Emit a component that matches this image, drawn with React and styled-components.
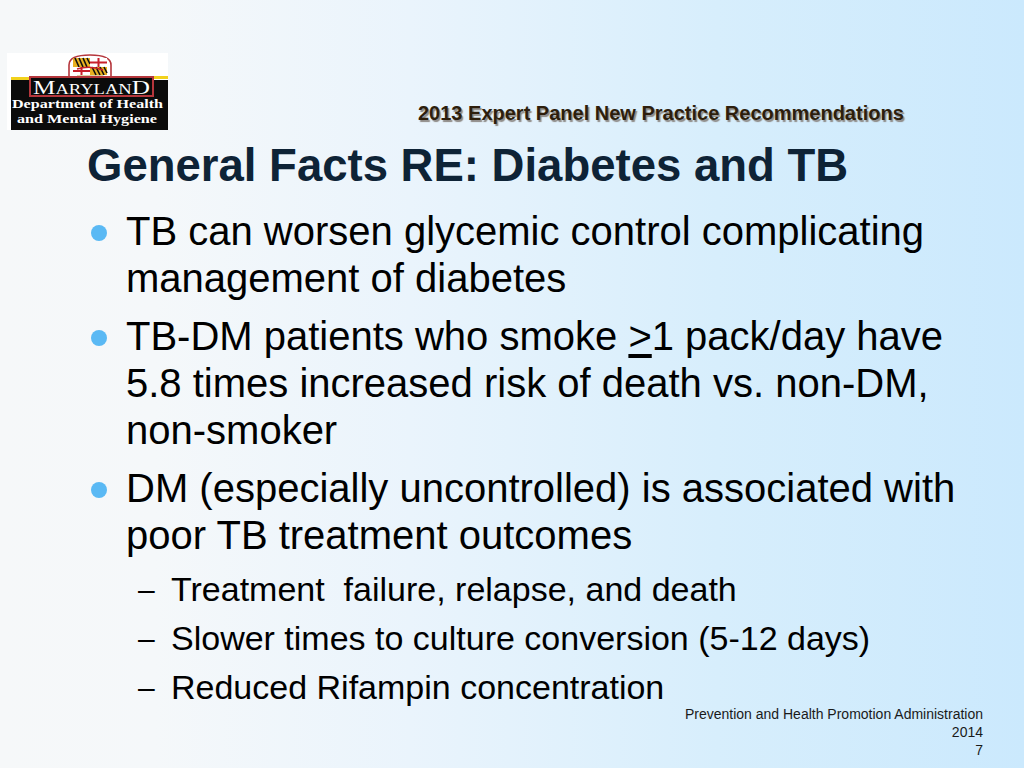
import React from "react";
import styled, { createGlobalStyle } from "styled-components";

const Global = createGlobalStyle`
  html, body { margin: 0; padding: 0; }
  body { font-family: "Liberation Sans", Arial, sans-serif; }
`;

const Page = styled.div`
  width: 1024px;
  height: 768px;
  overflow: hidden;
  display: flex;
  flex-direction: column;
  background: linear-gradient(90deg, #f6f8f9 0%, #f5f8fa 15%, #eaf4fc 40%, #d7eefc 70%, #cbe9fd 100%);
  color: #000;
`;

const Main = styled.main`
  flex: 1;
  min-height: 0;
`;

const Header = styled.header`
  display: flex;
  align-items: flex-end;
  padding: 53px 0 0 7px;
`;

const LogoBox = styled.div`
  width: 161px;
  height: 77px;
  flex: none;
  svg { display: block; }
`;

const Subtitle = styled.div`
  margin-left: 250px;
  margin-bottom: 5px;
  font-size: 20px;
  line-height: 24px;
  font-weight: bold;
  color: #2d1e0c;
  text-shadow: 1.5px 1.5px 1px #8e8a86;
  white-space: nowrap;
`;

const Heading = styled.h1`
  margin: 9px 0 0 0;
  padding-left: 87px;
  font-size: 45.5px;
  line-height: 54px;
  font-weight: bold;
  color: #0e2336;
  white-space: nowrap;
`;

const List = styled.ul`
  list-style: none;
  margin: 15px 0 0 0;
  padding: 0;
`;

const Item = styled.li`
  display: grid;
  grid-template-columns: 38px 1fr;
  padding: 0 50px 0 88px;
  margin-top: ${(p) => (p.$first ? 0 : 11)}px;
  font-size: 40px;
  line-height: 47px;
`;

const Bullet = styled.span`
  width: 16px;
  height: 16px;
  border-radius: 50%;
  background: #5ab9f4;
  margin: 17px 0 0 3px;
`;

const ItemBody = styled.div``;

const SubList = styled.ul`
  list-style: none;
  margin: 10px 0 0 0;
  padding: 0;
`;

const SubItem = styled.li`
  display: grid;
  grid-template-columns: 33px 1fr;
  padding-left: 138px;
  margin-top: ${(p) => (p.$first ? 0 : 8)}px;
  font-size: 34px;
  line-height: 41px;
  white-space: nowrap;
`;

const Dash = styled.span`
  font-size: 30px;
`;

const Under = styled.span`
  text-decoration: underline;
  text-underline-offset: 4px;
`;

const Footer = styled.footer`
  padding: 0 41px 9px 0;
  text-align: right;
  font-size: 14px;
  line-height: 18px;
  color: #1a1a1a;
`;

const FooterLine = styled.div``;

function Logo() {
  return (
    <svg width="161" height="77" viewBox="0 0 161 77">
      <rect x="0" y="0" width="161" height="77" fill="#ffffff" />
      <path d="M62 27 V12 Q62 2 83 2 Q104 2 104 12 V27 Z" fill="#fff" stroke="#b5363c" strokeWidth="1.6" />
      <g>
        <rect x="66" y="5" width="17" height="9" fill="#e8b021" />
        <path d="M68 5 L72 14 M72 5 L76 14 M76 5 L80 14 M80 5 L83 11" stroke="#111" strokeWidth="1.6" />
        <rect x="83" y="5" width="17" height="9" fill="#fff" />
        <rect x="83" y="8.5" width="17" height="2" fill="#c8202c" />
        <rect x="90.5" y="5" width="2" height="9" fill="#c8202c" />
        <rect x="66" y="14" width="17" height="8" fill="#fff" />
        <rect x="66" y="17" width="17" height="2" fill="#c8202c" />
        <rect x="73.5" y="14" width="2" height="8" fill="#c8202c" />
        <rect x="83" y="14" width="17" height="8" fill="#e8b021" />
        <path d="M85 14 L89 22 M89 14 L93 22 M93 14 L97 22 M97 14 L100 20" stroke="#111" strokeWidth="1.6" />
        <path d="M70 16 Q83 12 96 17" stroke="#c8202c" strokeWidth="1.4" fill="none" />
      </g>
      <rect x="70" y="22.5" width="26" height="1.5" fill="#b9a64a" />
      <rect x="4" y="24" width="18" height="3" fill="#f2d21c" />
      <rect x="146" y="23" width="15" height="3" fill="#f2d21c" />
      <rect x="4" y="27" width="157" height="50" fill="#0b0b0b" />
      <rect x="23" y="24" width="123" height="19" fill="#0b0b0b" stroke="#b5363c" strokeWidth="2" />
      <text
        x="84.5"
        y="40.5"
        textAnchor="middle"
        fill="#fff"
        fontFamily="'Liberation Serif', 'Times New Roman', serif"
        fontSize="14"
        textLength="117"
        lengthAdjust="spacingAndGlyphs"
      >
        <tspan fontSize="19">M</tspan>ARYLAN<tspan fontSize="19">D</tspan>
      </text>
      <text
        x="5"
        y="55"
        fill="#fff"
        fontWeight="bold"
        fontFamily="'Liberation Serif', 'Times New Roman', serif"
        fontSize="13.5"
        textLength="151"
        lengthAdjust="spacingAndGlyphs"
      >
        Department of Health
      </text>
      <text
        x="10"
        y="69.5"
        fill="#fff"
        fontWeight="bold"
        fontFamily="'Liberation Serif', 'Times New Roman', serif"
        fontSize="13.5"
        textLength="140"
        lengthAdjust="spacingAndGlyphs"
      >
        and Mental Hygiene
      </text>
    </svg>
  );
}

export default function App() {
  return (
    <>
      <Global />
      <Page>
        <Main>
          <Header>
            <LogoBox>
              <Logo />
            </LogoBox>
            <Subtitle>2013 Expert Panel New Practice Recommendations</Subtitle>
          </Header>
          <Heading>General Facts RE: Diabetes and TB</Heading>
          <List>
            <Item $first>
              <Bullet />
              <ItemBody>
                TB can worsen glycemic control complicating management of diabetes
              </ItemBody>
            </Item>
            <Item>
              <Bullet />
              <ItemBody>
                TB-DM patients who smoke <Under>&gt;</Under>1 pack/day have 5.8 times increased risk of
                death vs. non-DM, non-smoker
              </ItemBody>
            </Item>
            <Item>
              <Bullet />
              <ItemBody>
                DM (especially uncontrolled) is associated with poor TB treatment outcomes
              </ItemBody>
            </Item>
          </List>
          <SubList>
            <SubItem $first>
              <Dash>–</Dash>
              <span>Treatment&nbsp; failure, relapse, and death</span>
            </SubItem>
            <SubItem>
              <Dash>–</Dash>
              <span>Slower times to culture conversion (5-12 days)</span>
            </SubItem>
            <SubItem>
              <Dash>–</Dash>
              <span>Reduced Rifampin concentration</span>
            </SubItem>
          </SubList>
        </Main>
        <Footer>
          <FooterLine>Prevention and Health Promotion Administration</FooterLine>
          <FooterLine>2014</FooterLine>
          <FooterLine>7</FooterLine>
        </Footer>
      </Page>
    </>
  );
}
